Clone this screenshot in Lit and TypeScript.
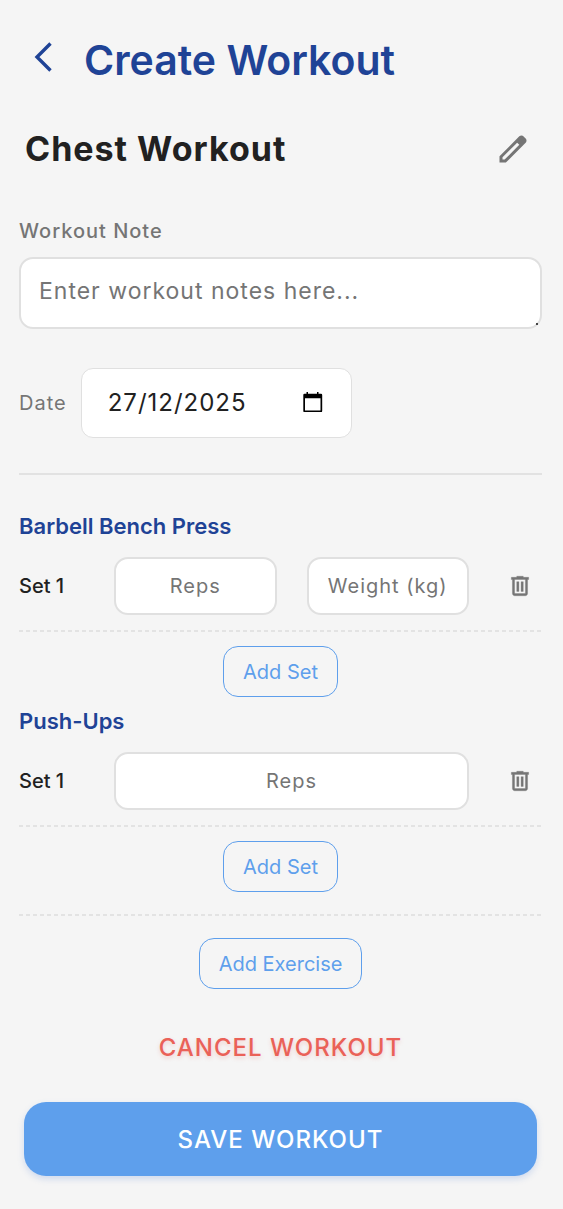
import { LitElement, html, css, svg } from "lit";
import { customElement, property, state } from "lit/decorators.js";

interface Exercise {
  id: string;
  name: string;
  fields: string[];
  sets: number;
}

const editIcon = svg`<path d="M200-200h57l391-391-57-57-391 391v57Zm-80 80v-170l528-527q12-11 26.5-17t30.5-6q16 0 31 6t26 18l55 56q12 11 17.5 26t5.5 30q0 16-5.5 30.5T817-647L290-120H120Z"/>`;
const trashIcon = svg`<path d="M280-120q-33 0-56.5-23.5T200-200v-520h-40v-80h200v-40h240v40h200v80h-40v520q0 33-23.5 56.5T680-120H280Zm400-600H280v520h400v-520ZM360-280h80v-360h-80v360Zm160 0h80v-360h-80v360Z"/>`;

const shared = css`
  *,
  *::before,
  *::after {
    box-sizing: border-box;
  }
  button,
  input,
  textarea {
    font-family: inherit;
    margin: 0;
  }
  button {
    cursor: pointer;
    padding: 0;
    border: 0;
    background: none;
    color: inherit;
  }
  svg {
    display: block;
    fill: currentColor;
  }
  ::placeholder {
    color: #757575;
    opacity: 1;
  }
  .dashed {
    height: 2px;
    background: repeating-linear-gradient(90deg, #e3e3e3 0 4px, transparent 4px 7px);
  }
  .outline {
    display: block;
    height: 51px;
    margin: 0 auto;
    padding: 0 19px;
    border: 1px solid #5e9fec;
    border-radius: 15px;
    color: #5e9fec;
    font-size: 20px;
    line-height: 24px;
  }
`;

@customElement("exercise-card")
export class ExerciseCard extends LitElement {
  @property({ attribute: false }) exercise!: Exercise;

  static styles = [
    shared,
    css`
      :host {
        display: block;
      }
      .name {
        margin: 0;
        color: #1f4396;
        font-size: 22px;
        font-weight: 600;
        line-height: 28px;
      }
      .row {
        display: grid;
        grid-template-columns: 95px 1fr 73px;
        align-items: center;
        padding: 17px 0 15px;
      }
      .set {
        color: #212121;
        font-size: 20px;
        font-weight: 500;
        line-height: 24px;
      }
      .fields {
        display: flex;
        gap: 30px;
      }
      .field {
        flex: 1 1 0;
        min-width: 0;
        width: 100%;
        height: 58px;
        padding: 0 12px;
        border: 2px solid #e0e0e0;
        border-radius: 14px;
        background: #fff;
        color: #212121;
        font-size: 20px;
        letter-spacing: 1px;
        text-align: center;
      }
      .remove {
        justify-self: center;
        color: #757575;
        margin-left: 29px;
      }
      .trash {
        stroke: currentColor;
        stroke-width: 12;
      }
      .outline {
        margin-top: 14px;
      }
    `,
  ];

  render() {
    const { id, name, fields, sets } = this.exercise;
    return html`
      <h3 class="name">${name}</h3>
      ${Array.from({ length: sets }, (_, i) => html`
        <div class="row">
          <span class="set">Set ${i + 1}</span>
          <div class="fields">
            ${fields.map(
              (f) => html`<input class="field" type="text" inputmode="decimal" id="${id}-${i}-${f}" aria-label="${f}" placeholder=${f} />`
            )}
          </div>
          <button class="remove" type="button" aria-label="Delete set">
            <svg class="trash" width="26" height="26" viewBox="0 -960 960 960">${trashIcon}</svg>
          </button>
        </div>
        <div class="dashed"></div>
      `)}
      <button class="outline" type="button" @click=${this.addSet}>Add Set</button>
    `;
  }

  private addSet() {
    this.exercise = { ...this.exercise, sets: this.exercise.sets + 1 };
  }
}

@customElement("app-root")
export class AppRoot extends LitElement {
  @state() private exercises: Exercise[] = [
    { id: "bench", name: "Barbell Bench Press", fields: ["Reps", "Weight (kg)"], sets: 1 },
    { id: "pushups", name: "Push-Ups", fields: ["Reps"], sets: 1 },
  ];

  static styles = [
    shared,
    css`
      :host {
        display: block;
        min-height: 100vh;
        box-sizing: border-box;
        padding: 34px 21px 33px 19px;
        background: #f5f5f5;
        color: #212121;
        font-family: Inter, "Liberation Sans", sans-serif;
      }
      .header {
        display: flex;
        align-items: center;
        gap: 28px;
        padding-left: 11px;
        color: #1f4396;
      }
      .back {
        padding-bottom: 6px;
      }
      .chevron {
        fill: none;
        stroke: currentColor;
        stroke-width: 3.4;
      }
      .title {
        margin: 0;
        font-size: 41px;
        font-weight: 600;
        line-height: 52px;
      }
      .workout {
        display: flex;
        align-items: center;
        justify-content: space-between;
        margin-top: 41px;
        padding: 0 11px 0 6px;
      }
      .workout-name {
        margin: 0;
        font-size: 34px;
        font-weight: 700;
        line-height: 44px;
        letter-spacing: 1px;
      }
      .edit {
        color: #757575;
      }
      .label {
        color: #757575;
        font-size: 20px;
        line-height: 24px;
        letter-spacing: 1px;
      }
      .note-label {
        display: block;
        margin-top: 48px;
        font-weight: 500;
      }
      .note {
        display: block;
        width: 100%;
        height: 72px;
        margin-top: 14px;
        padding: 17px 18px;
        border: 2px solid #e0e0e0;
        border-radius: 14px;
        background: #fff;
        color: #212121;
        font-size: 23px;
        line-height: 30px;
        letter-spacing: 1px;
        resize: vertical;
        overflow: hidden;
      }
      .note::-webkit-resizer {
        background: radial-gradient(circle at 12px 12px, #444 0 1px, transparent 1px);
      }
      .date-row {
        display: flex;
        align-items: center;
        gap: 14px;
        margin-top: 39px;
      }
      .date-box {
        display: flex;
        align-items: center;
        width: 271px;
        height: 70px;
        padding: 0 26px;
        border: 1px solid #e0e0e0;
        border-radius: 12px;
        background: #fff;
      }
      .date {
        flex: 1;
        min-width: 0;
        padding: 0;
        border: 0;
        outline: 0;
        background: none;
        color: #212121;
        font-size: 24px;
        line-height: 30px;
        letter-spacing: 1px;
      }
      .calendar {
        color: #000;
      }
      .rule {
        height: 2px;
        margin: 35px 0 37px;
        border: 0;
        background: #e2e2e2;
      }
      .exercises {
        display: grid;
        gap: 10px;
      }
      .divider {
        margin: 22px 0;
      }
      .cancel {
        display: block;
        margin: 44px auto 0;
        color: #ea6158;
        font-size: 24px;
        font-weight: 500;
        line-height: 30px;
        letter-spacing: 1px;
        text-shadow: 0 2px 4px rgba(234, 97, 88, 0.25);
      }
      .save-area {
        padding: 39px 5px 0;
      }
      .save {
        display: block;
        width: 100%;
        height: 74px;
        border-radius: 22px;
        background: #5e9fec;
        box-shadow: 0 3px 6px rgba(94, 140, 220, 0.25);
        color: #fff;
        font-size: 24px;
        font-weight: 500;
        letter-spacing: 1px;
      }
    `,
  ];

  render() {
    return html`
      <header class="header">
        <button class="back" type="button" aria-label="Back">
          <svg class="chevron" width="26" height="32" viewBox="0 0 26 32"><path d="M20.5 2.500 7 16l13.500 13.500" /></svg>
        </button>
        <h1 class="title">Create Workout</h1>
      </header>
      <main>
        <div class="workout">
          <h2 class="workout-name">Chest Workout</h2>
          <button class="edit" type="button" aria-label="Edit name">
            <svg width="36" height="36" viewBox="0 -960 960 960">${editIcon}</svg>
          </button>
        </div>
        <label class="label note-label" for="note">Workout Note</label>
        <textarea class="note" id="note" rows="1" placeholder="Enter workout notes here..."></textarea>
        <div class="date-row">
          <label class="label" for="date">Date</label>
          <div class="date-box">
            <input class="date" id="date" type="text" value="27/12/2025" />
            <button class="calendar" type="button" aria-label="Choose date">
              <svg width="24" height="24" viewBox="0 0 24 24">
                <path fill-rule="evenodd" d="M5.500 1h1.500v1.700h9V1h1.500v1.700h2.500a1.200 1.200 0 0 1 1.200 1.200v16a1.200 1.200 0 0 1-1.200 1.200H3.500a1.200 1.200 0 0 1-1.200-1.200v-16A1.200 1.200 0 0 1 3.500 2.700h2zM4 7.200v12.300h15.500V7.200z" />
              </svg>
            </button>
          </div>
        </div>
        <hr class="rule" />
        <section class="exercises">
          ${this.exercises.map((e) => html`<exercise-card .exercise=${e}></exercise-card>`)}
        </section>
        <div class="dashed divider"></div>
        <button class="outline" type="button">Add Exercise</button>
        <button class="cancel" type="button">CANCEL WORKOUT</button>
        <div class="save-area">
          <button class="save" type="button">SAVE WORKOUT</button>
        </div>
      </main>
    `;
  }
}
